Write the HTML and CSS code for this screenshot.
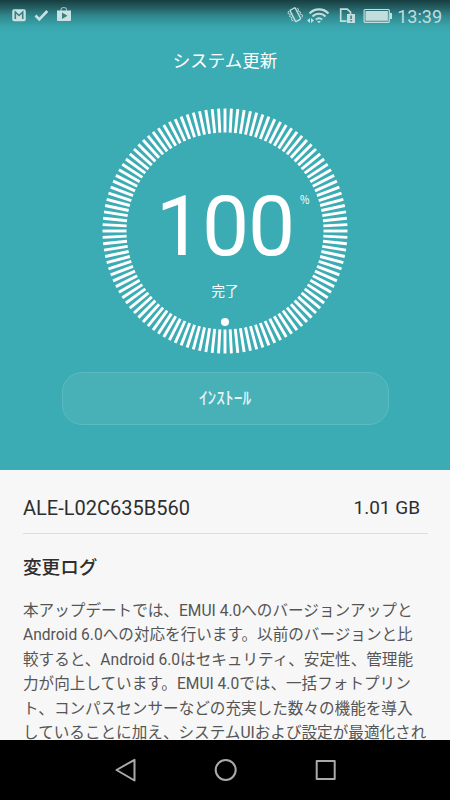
FILE: index.html
```html
<!DOCTYPE html>
<html lang="ja">
<head>
<meta charset="utf-8">
<title>システム更新</title>
<link rel="stylesheet" href="styles.css">
</head>
<body>
<div class="screen">
  <section class="hero">
    <header class="status">
      <div class="notifications">
        <svg width="64" height="20" viewBox="0 0 64 20">
          <g fill="none" stroke="#cbe2e3">
            <rect x="1" y="5" width="12" height="10.5" rx="1" fill="#cbe2e3" stroke-width="1.5"/>
            <path d="M3.300 14V7L7 10.500 10.700 7v7" stroke="#397f83" stroke-width="1.600"/>
            <path d="M23.500 10.500l3.800 3.800 8-8.300" stroke-width="2.600"/>
            <path d="M49 6.500V5q0-2.500 2.800-2.500T54.500 5v1.500" stroke="#91bec0" stroke-width="1.200"/>
          </g>
          <path d="M45 5.500h14v9.500q0 1-1 1H46q-1 0-1-1z" fill="#cbe2e3"/>
          <path d="M50 7.500l5.500 3.200L50 14z" fill="#397f83"/>
        </svg>
      </div>
      <div class="indicators">
        <svg width="108" height="20" viewBox="0 0 108 20">
          <g fill="none" stroke="#c3dddd">
            <path d="M5.200 6.200q-.3-.8.500-1.200l3.500-2q.8-.4 1.200.4l5 9.600q.4.800-.4 1.300l-3.500 2q-.8.400-1.200-.4z" stroke-width="1.400"/>
            <path d="M3.500 6L3 8.500l2.500 1-1 2 2.500 1-.5 2.500 2 1M12 3l1.500 1-.5 2 2.500 1-.5 2 2.500 1-.5 2.500" stroke-width=".9"/>
            <path d="M24.500 8.500a13 13 0 0 1 19 0" stroke-width="2.100"/>
            <path d="M27.500 11.600a9 9 0 0 1 13 0" stroke-width="2.100"/>
            <path d="M30.800 14.600a4.500 4.500 0 0 1 6.400 0" stroke-width="1.900"/>
            <path d="M61.500 16.100h-5.800V4.200h6.500l3.300 3v2" stroke-width="1.700"/>
            <rect x="79.100" y="4.500" width="25.200" height="12.800" rx="1" stroke-width="1.200"/>
          </g>
          <path d="M22 15.500l3-2.600v5.200zM29 15.500l-3-2.600v5.200zM32 16h4l-2 2.200zM62 9h8v9h-8zM80.500 6h22.400v9.800H80.500zM105 8h2v6h-2z" fill="#c3dddd"/>
          <path d="M65.300 10.500h1.500v3.500h-1.500zM65.300 15h1.500v1.500h-1.500z" fill="#397f83"/>
        </svg>
        <span class="clock">13:39</span>
      </div>
    </header>
    <h1 class="title">システム更新</h1>
    <div class="dial">
      <svg class="ring" width="250" height="250" viewBox="-125 -125 250 250">
        <g id="ticks" stroke="#fff" stroke-width="2.900"></g>
        <circle cy="91" r="4" fill="#fff"/>
      </svg>
      <span class="percent">100</span>
      <span class="unit">%</span>
      <span class="state">完了</span>
    </div>
    <button class="install">ｲﾝｽﾄｰﾙ</button>
  </section>
  <main class="details">
    <div class="version"><span>ALE-L02C635B560</span><span class="size">1.01 GB</span></div>
    <h2 class="heading">変更ログ</h2>
    <p class="log">本アップデートでは、EMUI 4.0へのバージョンアップと<br>Android 6.0への対応を行います。以前のバージョンと比<br>較すると、Android 6.0はセキュリティ、安定性、管理能<br>力が向上しています。EMUI 4.0では、一括フォトプリン<br>ト、コンパスセンサーなどの充実した数々の機能を導入<br>していることに加え、システムUIおよび設定が最適化され</p>
  </main>
  <nav class="nav">
    <svg width="450" height="60" viewBox="0 0 450 60" fill="none" stroke="#aaa" stroke-width="2" stroke-linejoin="round">
      <path d="M134.500 19.800v20.700L116.500 30z"/>
      <circle cx="225.700" cy="30" r="10"/>
      <rect x="316.700" y="21" width="18" height="18"/>
    </svg>
  </nav>
</div>
<script src="ring.js"></script>
</body>
</html>
```
FILE: styles.css
```css
* { box-sizing: border-box; }
body { margin: 0; font-family: Roboto, "Noto Sans CJK JP", sans-serif; }
.screen { width: 450px; height: 800px; display: flex; flex-direction: column; overflow: hidden; background: #f7f7f7; }
.hero { height: 470px; flex: none; display: flex; flex-direction: column; align-items: center; color: #fff; background: linear-gradient(#173e41 0, #235b5f 7px, #30888e 16px, #3aa7ae 27px, #3bacb4 34px); }
.status { width: 100%; height: 32px; display: flex; justify-content: space-between; padding: 0 8px 0 12px; }
.notifications { padding-top: 5px; }
.indicators { display: flex; }
.indicators svg { margin: 5px 4px 0 0; }
.indicators svg, .notifications svg { display: block; }
.clock { font-size: 18px; line-height: 33px; color: #c3dddd; }
.title { margin: 15px 0 0; font-size: 17.5px; line-height: 28px; font-weight: 400; }
.dial { position: relative; width: 250px; height: 250px; margin-top: 31px; }
.ring { display: block; }
.percent { position: absolute; left: 0; right: 0; top: 71px; text-align: center; font-size: 84px; line-height: 100px; letter-spacing: -1px; font-weight: 400; }
.unit { position: absolute; left: 200px; top: 85px; font-size: 12px; line-height: 16px; font-family: "Noto Sans CJK JP", sans-serif; transform: scaleX(.85); transform-origin: left; }
.state { position: absolute; left: 0; right: 0; top: 174px; text-align: center; font-size: 13.5px; line-height: 22px; }
.install { width: 327px; height: 53px; margin-top: 16px; border: 1px solid #5cbbc1; border-radius: 20px; background: #48b1b8; color: #e4f4f5; font: 500 17.4px "Noto Sans CJK JP", sans-serif; padding: 0 0 5px; }
.details { height: 270px; flex: none; padding: 0 23px; overflow: hidden; color: #2e2e2e; }
.version { height: 64px; display: flex; justify-content: space-between; align-items: center; padding: 12px 8px 0 0; border-bottom: 1px solid #dedede; font-size: 20px; margin-right: -1px; }
.size { font-size: 19px; }
.heading { margin: 20px 0 0; font-size: 18.600px; line-height: 28px; font-weight: 500; }
.log { margin: 17px -10px 0 0; color: #555; font-size: 15.600px; line-height: 24.400px; white-space: nowrap; }
.nav { height: 60px; flex: none; background: #000; }
.nav svg { display: block; }
```
FILE: ring.js
```js
const ticks = document.getElementById("ticks");
for (let i = 0; i < 120; i++) {
  const line = document.createElementNS("http://www.w3.org/2000/svg", "line");
  line.setAttribute("y1", -98.5);
  line.setAttribute("y2", -122.5);
  line.setAttribute("transform", `rotate(${i * 3})`);
  ticks.append(line);
}
```
